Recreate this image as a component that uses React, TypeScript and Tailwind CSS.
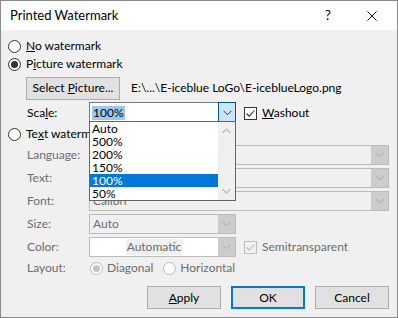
import React from "react";

const Chev = ({ c = "#5f5f5f" }: { c?: string }) => (
  <svg width="9" height="6" viewBox="0 0 9 6">
    <path d="M0.5 0.8 L4.5 4.8 L8.5 0.8" fill="none" stroke={c} strokeWidth="1" />
  </svg>
);

const ChevUp = ({ c = "#bdbdbd" }: { c?: string }) => (
  <svg width="9" height="6" viewBox="0 0 9 6">
    <path d="M0.5 5 L4.5 1 L8.5 5" fill="none" stroke={c} strokeWidth="1.3" />
  </svg>
);

const Radio = ({ checked = false, disabled = false }: { checked?: boolean; disabled?: boolean }) => (
  <div
    className={`w-[13px] h-[13px] rounded-full border flex items-center justify-center shrink-0 ${
      disabled ? "border-[#bcbcbc] bg-[#fcfcfc]" : "border-[#333] bg-white"
    }`}
  >
    {checked && (
      <div className={`w-[7px] h-[7px] rounded-full ${disabled ? "bg-[#c4c4c4]" : "bg-[#333]"}`} />
    )}
  </div>
);

const Check = ({ disabled = false }: { disabled?: boolean }) => (
  <div
    className={`w-[13px] h-[13px] border flex items-center justify-center shrink-0 ${
      disabled ? "border-[#bcbcbc] bg-[#f0f0f0]" : "border-[#333] bg-white"
    }`}
  >
    <svg width="11" height="11" viewBox="0 0 11 11">
      <path d="M1.5 5.5 L4.2 8.2 L9.5 2.5" fill="none" stroke={disabled ? "#bcbcbc" : "#333"} strokeWidth="1.1" />
    </svg>
  </div>
);

const Label = ({ children, dis = false }: { children: React.ReactNode; dis?: boolean }) => (
  <div className={`w-[62px] shrink-0 pl-[26px] box-content ${dis ? "text-[#6d6d6d]" : "text-black"}`}>{children}</div>
);

const DisCombo = ({ w, text, white = false }: { w: string; text?: string; white?: boolean }) => (
  <div className={`${w} h-[20px] border border-[#bcbcbc] ${white ? "bg-white" : "bg-[#f0f0f0]"} flex`}>
    <div className="flex-1 pl-[3px] text-[#6d6d6d] flex items-center leading-none">{text}</div>
    <div className="w-[17px] bg-[#cccccc] flex items-center justify-center">
      <Chev c="#a8a8a8" />
    </div>
  </div>
);

const Btn = ({ children, w, focus = false }: { children: React.ReactNode; w: string; focus?: boolean }) => (
  <div
    className={`${w} h-[23px] bg-[#e1e1e1] flex items-center justify-center ${
      focus ? "border-2 border-[#0078d7]" : "border border-[#adadad]"
    }`}
  >
    {children}
  </div>
);

export default function App() {
  return (
    <div
      className="w-[398px] h-[318px] border border-[#8a8a8a] bg-[#f0f0f0] flex flex-col text-[12px] text-black relative"
      style={{ fontFamily: '"Segoe UI", Lato, "Noto Sans", sans-serif' }}
    >
      {/* title bar */}
      <div className="h-[29px] bg-white flex items-center shrink-0">
        <div className="pl-[9px] flex-1 text-[13px]">Printed Watermark</div>
        <div className="w-[10px] text-[13px] text-center mr-[34px]">?</div>
        <svg width="10" height="10" viewBox="0 0 10 10" className="mr-[20px]">
          <path d="M0.5 0.5 L9.5 9.5 M9.5 0.5 L0.5 9.5" stroke="#111" strokeWidth="1" />
        </svg>
      </div>

      <div className="flex flex-col relative">
        <div className="h-[16px] mt-[8px] flex items-center gap-[5px] pl-[7px]">
          <Radio />
          <span>
            <u>N</u>o watermark
          </span>
        </div>
        <div className="h-[16px] mt-[2px] flex items-center gap-[5px] pl-[7px]">
          <Radio checked />
          <span>
            P<u>i</u>cture watermark
          </span>
        </div>
        <div className="h-[22px] mt-[5px] flex items-center pl-[25px]">
          <Btn w="w-[94px]">
            <span>
              Select <u>P</u>icture...
            </span>
          </Btn>
          <span className="ml-[11px]">E:\...\E-iceblue LoGo\E-iceblueLogo.png</span>
        </div>
        <div className="h-[22px] mt-[3px] flex items-center">
          <Label>
            Sca<u>l</u>e:
          </Label>
          <div className="w-[147px] h-[22px] border border-[#7a7a7a] bg-white flex">
            <div className="flex-1 flex items-center pl-[2px]">
              <span className="bg-[#99c9ef] px-[1px] leading-[14px]">100%</span>
            </div>
            <div className="w-[18px] -m-px border border-[#005499] bg-[#cce4f7] flex items-center justify-center">
              <Chev c="#333" />
            </div>
          </div>
          <div className="ml-[8px] flex items-center gap-[5px]">
            <Check />
            <span>
              <u>W</u>ashout
            </span>
          </div>
        </div>
        <div className="h-[16px] mt-[2px] flex items-center gap-[5px] pl-[7px]">
          <Radio />
          <span>
            Te<u>x</u>t watermark
          </span>
        </div>
        <div className="h-[20px] mt-[3px] flex items-center">
          <Label dis>Language:</Label>
          <DisCombo w="w-[300px]" />
        </div>
        <div className="h-[20px] mt-[3px] flex items-center">
          <Label dis>Text:</Label>
          <DisCombo w="w-[300px]" />
        </div>
        <div className="h-[20px] mt-[3px] flex items-center">
          <Label dis>Font:</Label>
          <DisCombo w="w-[300px]" text="Calibri" />
        </div>
        <div className="h-[20px] mt-[3px] flex items-center">
          <Label dis>Size:</Label>
          <DisCombo w="w-[147px]" text="Auto" />
        </div>
        <div className="h-[20px] mt-[3px] flex items-center">
          <Label dis>Color:</Label>
          <div className="w-[147px] h-[20px] border border-[#bcbcbc] bg-white flex">
            <div className="flex-1 flex items-center justify-center">
              <span className="bg-[#f0f0f0] text-[#6d6d6d] px-[1px] leading-[16px]">Automatic</span>
            </div>
            <div className="w-[17px] bg-[#cccccc] flex items-center justify-center">
              <Chev c="#a8a8a8" />
            </div>
          </div>
          <div className="ml-[8px] flex items-center gap-[5px] text-[#6d6d6d]">
            <Check disabled />
            <span>Semitransparent</span>
          </div>
        </div>
        <div className="h-[16px] mt-[3px] flex items-center text-[#6d6d6d]">
          <Label dis>Layout:</Label>
          <div className="flex items-center gap-[4px] ml-[1px]">
            <Radio checked disabled />
            <span>Diagonal</span>
          </div>
          <div className="flex items-center gap-[4px] ml-[10px]">
            <Radio disabled />
            <span>Horizontal</span>
          </div>
        </div>
        <div className="h-[23px] mt-[10px] flex items-center justify-end pr-[8px] gap-[10px]">
          <Btn w="w-[74px]">
            <span>
              <u>A</u>pply
            </span>
          </Btn>
          <Btn w="w-[74px]" focus>
            <span>OK</span>
          </Btn>
          <Btn w="w-[74px]">
            <span>Cancel</span>
          </Btn>
        </div>

        {/* dropdown list overlay */}
        <div className="absolute left-[88px] top-[91px] w-[147px] h-[80px] border border-[#646464] bg-white flex">
          <div className="flex-1 flex flex-col">
            {["Auto", "500%", "200%", "150%", "100%", "50%"].map((t) => (
              <div
                key={t}
                className={`h-[13px] leading-[13px] pl-[2px] ${t === "100%" ? "bg-[#0078d7] text-white" : ""}`}
              >
                {t}
              </div>
            ))}
          </div>
          <div className="w-[17px] bg-[#f0f0f0] flex flex-col items-center justify-between py-[6px]">
            <ChevUp />
            <div className="rotate-180">
              <ChevUp />
            </div>
          </div>
        </div>
      </div>
    </div>
  );
}
